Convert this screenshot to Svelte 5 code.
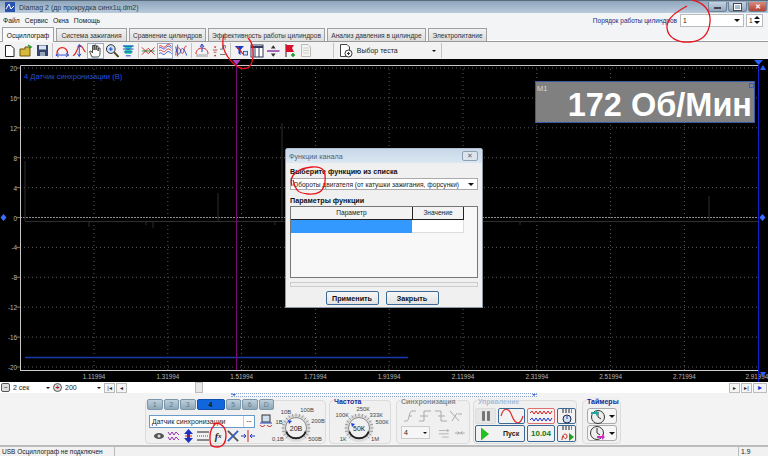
<script>
  const tabs = [
    ['Осциллограф', 52], ['Система зажигания', 71], ['Сравнение цилиндров', 77],
    ['Эффективность работы цилиндров', 117], ['Анализ давления в цилиндре', 99], ['Электропитание', 59]
  ];
  const channels = ['1', '2', '3', '4', '5', '6', 'D'];
  const ys = [20, 16, 12, 8, 4, 0, -4, -8, -12, -16, -20];
  const xs = ['1.11994', '1.31994', '1.51994', '1.71994', '1.91994', '2.11994', '2.31994', '2.51994', '2.71994', '2.91994'];
  const yPos = (i) => 67 + i * 29.9;
  const xPos = (i) => 94 + i * 73.8;
  const grid = [94, 167.8, 241.6, 315.4, 389.2, 463, 536.8, 610.6, 684.4];
  const ticks = (n, a0, a1, r0, r1) =>
    Array.from({ length: n }, (_, i) => {
      const a = ((a0 + ((a1 - a0) * i) / (n - 1)) * Math.PI) / 180;
      return [r0 * Math.cos(a), r0 * Math.sin(a), r1 * Math.cos(a), r1 * Math.sin(a)];
    });
  const knobTicks = ticks(19, 135, 405, 11.5, 14.5);
</script>

<div class="app">
  <header class="titlebar">
    <svg class="appicon" width="10" height="10" viewBox="0 0 10 10"><rect width="10" height="10" fill="#2a52b0"/><path d="M1 7 4 2 6 7 9 4" stroke="#fff" fill="none"/></svg>
    <span class="title">Diamag 2 (др прокрудка синх1ц.dm2)</span>
    <div class="winbtns">
      <span class="wb"><i class="min"></i></span>
      <span class="wb"><i class="rest"></i></span>
      <span class="wb close">✕</span>
    </div>
  </header>

  <div class="menubar">
    <nav class="menu"><span>Файл</span><span>Сервис</span><span>Окна</span><span>Помощь</span></nav>
    <div class="order">
      <span class="orderlabel">Порядок работы цилиндров</span>
      <div class="combo ordercombo"><span>1</span><b class="arrow"></b></div>
      <div class="spin"><span>1</span><span class="spinarrows"><b class="up"></b><b class="arrow"></b></span></div>
    </div>
  </div>

  <div class="tabs">
    {#each tabs as [label, w], i}
      <div class="tab" class:active={i === 0} style="width:{w}px">{label}</div>
    {/each}
  </div>

  <div class="toolbar">
    <button class="tb"><svg width="13" height="14" viewBox="0 0 13 14"><path d="M2.500 1.500H8L11 4.500V12.500H2.500Z" fill="#fff" stroke="#222"/></svg></button>
    <button class="tb"><svg width="14" height="14" viewBox="0 0 14 14"><path d="M1 5H6V3H11V12H1Z" fill="#d8b838" stroke="#6a5510"/><path d="M9 1l3 2-2 1" stroke="#1a9a30" fill="none" stroke-width="1.500"/></svg></button>
    <button class="tb"><svg width="13" height="13" viewBox="0 0 13 13"><rect x="1" y="1" width="11" height="11" fill="#33456e"/><rect x="3" y="1.500" width="7" height="4" fill="#dfe4ee"/><rect x="4" y="8" width="5" height="4" fill="#9aa4b8"/></svg></button>
    <i class="sep"></i>
    <button class="tb"><svg width="16" height="15" viewBox="0 0 16 15"><path d="M2 11C3 2 13 2 14 11" fill="none" stroke="#e02020" stroke-width="1.400"/><path d="M1 12.500H15M1 12.500l3-2M1 12.500l3 2M15 12.500l-3-2M15 12.500l-3 2" stroke="#2040d0" fill="none"/></svg></button>
    <button class="tb"><svg width="16" height="15" viewBox="0 0 16 15"><path d="M1 13C5 13 6 2 9 2S13 9 15 9" fill="none" stroke="#e02020" stroke-width="1.300"/><path d="M8 1V14M8 1 6 4M8 1l2 3M8 14l-2-3M8 14l2-3" stroke="#2040d0" fill="none"/></svg></button>
    <button class="tb on"><svg width="14" height="15" viewBox="0 0 14 15"><path d="M4 14 1.500 8.500 3 8 4.500 10V2.500H6V7L6.500 2H8V7L8.500 3H10V8L10.500 5H12V10C12 12 11 14 10 14Z" fill="#fff" stroke="#222" stroke-width=".8"/></svg></button>
    <button class="tb"><svg width="15" height="15" viewBox="0 0 15 15"><circle cx="6" cy="6" r="4.500" fill="#cfe6f6" stroke="#223"/><path d="M4 6H8M6 4V8" stroke="#1a40c0"/><path d="M9.500 9.500 14 14" stroke="#524020" stroke-width="2"/></svg></button>
    <button class="tb"><svg width="15" height="15" viewBox="0 0 15 15"><path d="M2 2H13L9 7H6Z" fill="#22c8b8"/><path d="M4 7H11V11H4Z" fill="#22d8a0"/><path d="M2 3H13M2 6H13M3 9H12M5 13H10" stroke="#2040c0"/></svg></button>
    <i class="sep"></i>
    <button class="tb"><svg width="16" height="14" viewBox="0 0 16 14"><path d="M1 3 8 10 15 3M1 11 8 4 15 11" fill="none" stroke="#d82020"/><path d="M1 7H15" stroke="#208030"/></svg></button>
    <button class="tb on"><svg width="16" height="15" viewBox="0 0 16 15"><path d="M1 3C4 0 5 6 8 3S12 0 15 3M1 8C4 5 5 11 8 8S12 5 15 8" fill="none" stroke="#d82020"/><path d="M1 5C4 2 5 8 8 5S12 2 15 5M1 11C4 8 5 14 8 11S12 8 15 11" fill="none" stroke="#2040d0"/></svg></button>
    <button class="tb"><svg width="16" height="15" viewBox="0 0 16 15"><path d="M2 13C2 3 6 3 7 7S10 13 11 7 14 3 14 3" fill="none" stroke="#d82020"/><path d="M2 3C3 13 6 13 7 9S10 2 14 13" fill="none" stroke="#2040d0"/><path d="M4 1V14" stroke="#208030"/></svg></button>
    <i class="sep"></i>
    <button class="tb wide"><svg width="16" height="15" viewBox="0 0 16 15"><path d="M2 11C2 3 14 3 14 11" fill="none" stroke="#d82020"/><path d="M8 1V9M6 4 8 1l2 3" stroke="#2040d0" fill="none"/><rect x="2" y="11" width="12" height="3" fill="#c8c8c8"/></svg></button>
    <button class="tb wide"><svg width="18" height="15" viewBox="0 0 18 15"><path d="M1 7H6M2 9.500H5" stroke="#b04040"/><path d="M2 3H5L3.500 5ZM2 14H5L3.500 12Z" fill="#c02020"/><path d="M9 6H12V2H15V5M9 12H15" stroke="#666" fill="none"/></svg></button>
    <i class="sep"></i>
    <button class="tb filter"><svg width="17" height="15" viewBox="0 0 17 15"><path d="M1 2H12L8 7V13L5.500 11V7Z" fill="#1838c8"/><path d="M4 3 11 12" stroke="#d82020" stroke-width="1.500"/><rect x="11.500" y="8.500" width="5" height="4.500" fill="#cfe0f6" stroke="#2050b0"/></svg></button>
    <button class="tb"><svg width="14" height="14" viewBox="0 0 14 14"><rect x="1" y="1" width="12" height="12" fill="#fff" stroke="#323a60"/><path d="M1 3H13" stroke="#323a60" stroke-width="2"/><path d="M5 3V13M9 3V13" stroke="#323a60"/><path d="M2 4h2v9H2Z" fill="#b8c4ee"/></svg></button>
    <button class="tb"><svg width="15" height="14" viewBox="0 0 15 14"><path d="M1 7H14" stroke="#8a30a0" stroke-width="1.500"/><path d="M7.500 1 5 4.500H10ZM7.500 13 5 9.500H10Z" fill="#333"/></svg></button>
    <button class="tb"><svg width="14" height="15" viewBox="0 0 14 15"><path d="M3 1V14" stroke="#222"/><path d="M3 2H11L9 5 11 9H3Z" fill="#d8102a"/><path d="M10 10V14M8 12H12" stroke="#10a020" stroke-width="1.500"/></svg></button>
    <button class="tb"><svg width="12" height="15" viewBox="0 0 12 15"><path d="M1.500 1.500H8L10.500 4V13.500H1.500Z" fill="#f4f4f0" stroke="#bbb"/><path d="M3 5H9M3 7.500H9M3 10H9" stroke="#ccc"/></svg></button>
    <i class="sep big"></i>
    <div class="testsel">
      <svg width="15" height="15" viewBox="0 0 15 15"><path d="M2.500 1.500H9L11.500 4V13.500H2.500Z" fill="#fff" stroke="#444"/><circle cx="10.500" cy="10.500" r="3.500" fill="#fff" stroke="#333"/><path d="M9 10.500H12M10.500 9V12" stroke="#333"/></svg>
      <span>Выбор теста</span>
      <b class="arrow"></b>
    </div>
    <i class="sep"></i>
  </div>

  <svg class="plot" width="768" height="323" viewBox="0 58 768 323">
    <rect x="0" y="58" width="768" height="323" fill="#000"/>
    {#each ys as v, i}
      <line x1="20" x2="757" y1={yPos(i)} y2={yPos(i)} class="dot" class:zero={v === 0}/>
      <text x="17" y={yPos(i) + 3} text-anchor="end" class="axis">{v}</text>
      <line x1="16" x2="20" y1={yPos(i)} y2={yPos(i)} stroke="#777"/>
    {/each}
    {#each grid as x}
      <line x1={x} x2={x} y1="64" y2="369" class="dot"/>
    {/each}
    {#each xs as label, i}
      <text x={Math.min(xPos(i), 757)} y="378" text-anchor="middle" class="axis">{label}</text>
    {/each}
    <path d="M20.500 369V64.500H758" fill="none" stroke="#c8c8c8"/>
    <path d="M20 369.500H758" stroke="#d0d0d0"/>
    <path d="M25 220.500H758M25 220V160M89 220V226M146 220V224M153 220V227M218 220V192M275 220V224M282 220V122M420 220V226M520 220V224M709 220V195" stroke="#2e2e2e"/>
    <path d="M25 356.500H408" stroke="#1a38b0" stroke-width="1.400"/>
    <line x1="236.500" x2="236.500" y1="64" y2="369" stroke="#7a0a7a"/>
    <path d="M232.500 59H240.500L236.500 64Z" fill="#b040c0"/>
    <line x1="758.500" x2="758.500" y1="64" y2="381" stroke="#1420d0"/>
    <path d="M754 59H763L758.500 64Z" fill="#2a60ff"/>
    <path d="M763 64 766 69H760ZM763 376 766 371H760Z" fill="#2a60ff"/>
    <path d="M3.500 213 6.500 216.500 3.500 220 .5 216.500ZM762.500 213 765.500 216.500 762.500 220 759.500 216.500Z" fill="#3a70ff"/>
    <text x="24" y="78" class="chname">4 Датчик синхронизации (В)</text>
    <rect x="535.500" y="80.500" width="219" height="41" fill="#808080" stroke="#3a5aa8"/>
    <rect x="749.500" y="82.500" width="4" height="4" fill="none" stroke="#3a5ad0"/>
    <text x="537" y="90" class="m1">M1</text>
    <text x="752" y="115" text-anchor="end" class="rpm">172 Об/Мин</text>
  </svg>

  <div class="scrollrow">
    <div class="scrollleft">
      <i class="roundbtn">−</i>
      <div class="flatcombo w1"><span>2 сек</span><b class="arrow"></b></div>
      <i class="roundbtn red">+</i>
      <div class="flatcombo w2"><span>200</span><b class="arrow"></b></div>
      <i class="navbtn">|◂</i>
      <i class="navbtn">◂</i>
    </div>
    <i class="thumb"></i>
    <div class="scrollright">
      <i class="navbtn">▸</i>
      <i class="navbtn">▸|</i>
      <i class="navbtn blue">▸</i>
    </div>
  </div>

  <div class="panel">
    <div class="ruler"><b class="rm l"></b><b class="rm r"></b></div>
    <div class="groups">
      <section class="group channel">
        <div class="chbtns">
          {#each channels as c}
            <span class="chbtn" class:sel={c === '4'}>{c}</span>
          {/each}
        </div>
        <div class="chfield">
          <div class="namefield"><span>Датчик синхронизации</span><b>...</b></div>
          <svg width="14" height="14" viewBox="0 0 14 14"><rect x="3" y="1" width="8" height="7" fill="#cde" stroke="#333"/><path d="M1 11C2 13 5 13 6 11M8 11C9 13 12 13 13 11" fill="none" stroke="#c02020"/><path d="M1 9H13" stroke="#2040c0"/></svg>
        </div>
        <div class="chicons">
          <span class="ci"><svg width="12" height="10" viewBox="0 0 12 10"><ellipse cx="6" cy="5" rx="5" ry="3" fill="#555"/><circle cx="6" cy="5" r="1.500" fill="#ddd"/></svg></span>
          <span class="ci"><svg width="13" height="13" viewBox="0 0 13 13"><path d="M1 2 3 5 5 2 7 5 9 2 12 5M1 7 3 10 5 7 7 10 9 7 12 10" fill="none" stroke="#9a30b0"/></svg></span>
          <span class="ci"><svg width="11" height="14" viewBox="0 0 11 14"><path d="M5.500 0 10 5H7V9H10L5.500 14 1 9H4V5H1Z" fill="#1a30c0"/><path d="M2 7H9" stroke="#d02020"/></svg></span>
          <span class="ci"><svg width="14" height="12" viewBox="0 0 14 12"><path d="M1 2H13M1 10H13" stroke="#222"/><path d="M1 6H13" stroke="#555" stroke-dasharray="1 1"/></svg></span>
          <span class="ci fx">f<small>x</small></span>
          <span class="ci"><svg width="12" height="12" viewBox="0 0 13 13"><path d="M1 1 12 12" stroke="#555" stroke-width="2"/><path d="M12 1 1 12" stroke="#3060c0" stroke-width="2"/></svg></span>
          <span class="ci"><svg width="14" height="12" viewBox="0 0 14 12"><path d="M7 0V12" stroke="#d02020"/><path d="M0 6H5M9 6H14M3 4l2 2-2 2M11 4 9 6l2 2" stroke="#2040c0" fill="none"/></svg></span>
        </div>
        <svg class="knob k1" width="64" height="36" viewBox="-32 -22 64 36">
          <circle r="14" class="kback"/>
          {#each knobTicks as t}<line x1={t[0]} y1={t[1]} x2={t[2]} y2={t[3]} stroke="#999"/>{/each}
          <circle r="10.500" class="kface"/>
          <path d="M-9.800 3.500A10.500 10.500 0 0 0 9.800 3.500" class="karc"/>
          <path d="M-8-8-4-7-7-4Z" fill="#1a40e0"/>
          <text y="2.500" text-anchor="middle" class="kval">20В</text>
          <text x="-10" y="-14" text-anchor="middle" class="kl">10В</text>
          <text x="11" y="-16" text-anchor="middle" class="kl">100В</text>
          <text x="-17" y="-4" text-anchor="middle" class="kl">1В</text>
          <text x="22" y="-5" text-anchor="middle" class="kl">200В</text>
          <text x="-18" y="13" text-anchor="middle" class="kl">0,1В</text>
          <text x="19" y="13" text-anchor="middle" class="kl">500В</text>
        </svg>
      </section>

      <section class="group freq">
        <h3 class="navy">Частота</h3>
        <svg class="knob" width="64" height="36" viewBox="-32 -22 64 36">
          <circle r="14" class="kback"/>
          {#each knobTicks as t}<line x1={t[0]} y1={t[1]} x2={t[2]} y2={t[3]} stroke="#999"/>{/each}
          <circle r="10.500" class="kface"/>
          <path d="M-9.800 3.500A10.500 10.500 0 0 0 9.800 3.500" class="karc"/>
          <path d="M-8-5-4-4-7-1Z" fill="#1a40e0"/>
          <text y="2.500" text-anchor="middle" class="kval">50К</text>
          <text x="-17" y="-11" text-anchor="middle" class="kl">100К</text>
          <text x="4" y="-17" text-anchor="middle" class="kl">250К</text>
          <text x="17" y="-11" text-anchor="middle" class="kl">333К</text>
          <text x="23" y="-4" text-anchor="middle" class="kl">500К</text>
          <text x="-16" y="13" text-anchor="middle" class="kl">1К</text>
          <text x="16" y="13" text-anchor="middle" class="kl">1М</text>
        </svg>
      </section>

      <section class="group sync">
        <h3 class="grey">Синхронизация</h3>
        <div class="syncrow">
          <svg width="14" height="12" viewBox="0 0 14 12"><path d="M1 11H4C6 11 6 1 9 1H13M6 6H9" stroke="#aaa" fill="none"/></svg>
          <svg width="14" height="12" viewBox="0 0 14 12"><path d="M1 11H6V1H13M2 6H10" stroke="#aaa" fill="none"/></svg>
          <svg width="14" height="12" viewBox="0 0 14 12"><path d="M1 1H7V11H13M4 6H11" stroke="#aaa" fill="none"/></svg>
          <svg width="14" height="12" viewBox="0 0 14 12"><path d="M1 1 10 11M3 11 8 3M9 4H13" stroke="#aaa" fill="none"/></svg>
        </div>
        <div class="syncrow second">
          <div class="flatcombo sc"><span>4</span><b class="arrow"></b></div>
          <svg width="14" height="12" viewBox="0 0 14 12"><path d="M1 3H13M1 7H13M5 11H13M11 1l2 2-2 2" stroke="#aaa" fill="none"/></svg>
          <svg width="14" height="12" viewBox="0 0 14 12"><path d="M1 6H13M4 4 6 6 4 8M10 4 8 6l2 2" stroke="#999" fill="none"/></svg>
        </div>
      </section>

      <section class="group control">
        <h3 class="pale">Управление</h3>
        <div class="ctrlgrid">
          <span class="cb pausebtn"><svg width="10" height="12" viewBox="0 0 10 12"><rect x="1" y="1" width="3" height="10" rx="1" fill="#777"/><rect x="6" y="1" width="3" height="10" rx="1" fill="#777"/></svg></span>
          <span class="cb"><svg width="24" height="14" viewBox="0 0 24 14"><path d="M1 7C4-3 9-1 12 7S20 17 23 7" fill="none" stroke="#e03030" stroke-width="1.200"/></svg></span>
          <span class="cb redb"><svg width="24" height="14" viewBox="0 0 24 14"><path d="M1 4 3 2 5 5 7 2 9 5 11 2 13 5 15 2 17 5 19 2 21 5 23 2" fill="none" stroke="#d02020"/><path d="M1 11 3 9 5 12 7 9 9 12 11 9 13 12 15 9 17 12 19 9 21 12 23 9" fill="none" stroke="#2030d0"/></svg></span>
          <span class="cb"><svg width="14" height="15" viewBox="0 0 14 15"><circle cx="7" cy="10" r="4" fill="#cfe0f0" stroke="#224"/><path d="M7 7V10" stroke="#2040c0"/><path d="M2 1H12M2 3H12" stroke="#223" stroke-dasharray="2 1"/></svg></span>
          <span class="cb start"><svg width="8" height="14" viewBox="0 0 10 16"><path d="M0 0 10 8 0 16Z" fill="#22c020"/></svg><b>Пуск</b></span>
          <span class="cb time">10.04</span>
          <span class="cb"><svg width="14" height="15" viewBox="0 0 14 15"><path d="M2 14C2 7 7 7 7 10S5 14 3 10" fill="none" stroke="#c02020"/><path d="M9 7 14 11 9 15Z" fill="#20a020"/><path d="M2 1H12M2 3H12" stroke="#223" stroke-dasharray="2 1"/></svg></span>
        </div>
      </section>

      <section class="group timers">
        <h3 class="navy">Таймеры</h3>
        <span class="tmr"><svg width="16" height="15" viewBox="0 0 16 15"><circle cx="8" cy="8" r="6.500" fill="#eee" stroke="#333"/><path d="M8 3V8L11 10" stroke="#333" fill="none"/><path d="M1 3H6V1L9 4 6 7V5H1Z" fill="#20a8a0"/></svg><b class="arrow"></b></span>
        <span class="tmr"><svg width="16" height="15" viewBox="0 0 16 15"><circle cx="7" cy="7" r="6.500" fill="#eee" stroke="#333"/><path d="M7 2V7L10 9" stroke="#333" fill="none"/><path d="M7 10H12V8L15 11 12 14V12H7Z" fill="#d030c0"/></svg><b class="arrow"></b></span>
      </section>
    </div>
  </div>

  <footer class="status">
    <span class="s1">USB Осциллограф не подключен</span>
    <span class="s2"></span>
    <span class="s3">1.9</span>
  </footer>

  <div class="dialog">
    <div class="dlgtitle"><span>Функции канала</span><i class="dlgclose">✕</i></div>
    <div class="dlgbody">
      <label class="dlglabel" for="fn">Выберите функцию из списка</label>
      <div class="combo dlgcombo" id="fn"><span>Обороты двигателя (от катушки зажигания, форсунки)</span><b class="arrow"></b></div>
      <div class="dlglabel second">Параметры функции</div>
      <div class="table">
        <div class="trow head"><span class="c1">Параметр</span><span class="c2">Значение</span></div>
        <div class="trow"><span class="c1 selc"></span><span class="c2 emptyc"></span></div>
      </div>
      <div class="progress"></div>
      <div class="dlgbtns"><button class="dbtn b1">Применить</button><button class="dbtn">Закрыть</button></div>
    </div>
  </div>

  <svg class="ink" width="768" height="456" viewBox="0 0 768 456" fill="none" stroke="#e8141c" stroke-width="1.300">
    <path d="M224 35C221 44 224 54 233 63S250 69 252 62 254 44 248 38"/>
    <path d="M692 0C703 2 711 10 710 22S702 41 690 42 668 38 667 28 678 11 687 6"/>
    <path d="M292 186C288 174 300 168 312 167S326 172 325 182 317 195 308 194 296 192 293 180"/>
    <path d="M213 424C221 421 226 428 226 435S224 447 217 447 210 444 210 437 212 428 216 423"/>
  </svg>
</div>

<style>
  :global(body) { margin: 0; }
  .app {
    position: relative; width: 768px; height: 456px; overflow: hidden;
    display: flex; flex-direction: column;
    background: #f0f0f0; color: #222;
    font-family: "Liberation Sans", Arial, sans-serif; font-size: 6.600px;
  }
  i { font-style: normal; }
  button { font-family: inherit; padding: 0; }
  .titlebar {
    height: 13px; flex: none; display: flex; align-items: center;
    padding-left: 5px; gap: 4px; box-sizing: border-box;
    border-top: 1px solid #5a6b7c;
    background: linear-gradient(#8fa6bd, #b9cadb);
    color: #2a3a48; font-size: 7px;
  }
  .title { flex: 1; }
  .winbtns { display: flex; margin-right: 1px; gap: 1px; }
  .wb {
    width: 19px; height: 10px; border: 1px solid #6f8296; border-top: 0; box-sizing: border-box;
    border-radius: 0 0 3px 3px; background: linear-gradient(#c2d2e2, #94a8bc);
    display: flex; align-items: center; justify-content: center;
  }
  .wb .min { width: 7px; height: 2px; background: #fff; border: 1px solid #445; box-sizing: border-box; margin-top: 3px; }
  .wb .rest { width: 7px; height: 6px; border: 1px solid #fff; outline: 1px solid #445; box-sizing: border-box; }
  .wb.close { background: linear-gradient(#d88a80, #b84030); color: #fff; font-size: 7px; font-weight: bold; }
  .menubar {
    height: 14px; flex: none; display: flex; align-items: center; justify-content: space-between;
    background: #f3f4f5; padding: 0 5px 0 3px;
  }
  .menu { display: flex; gap: 5px; font-size: 6.800px; }
  .order { display: flex; align-items: center; }
  .orderlabel { color: #1a2a80; font-size: 6.500px; margin-right: 3px; }
  .combo {
    display: flex; align-items: center; justify-content: space-between;
    box-sizing: border-box; background: #fff; border: 1px solid #bbb; padding: 0 3px 0 2px;
  }
  .ordercombo { width: 64px; height: 13px; }
  .spin {
    width: 17px; height: 13px; margin-left: 2px; box-sizing: border-box; background: #fff; border: 1px solid #bbb;
    display: flex; align-items: center; justify-content: space-between; padding: 0 2px;
  }
  .spinarrows { display: flex; flex-direction: column; gap: 2px; }
  .arrow { display: block; width: 0; height: 0; border: 3px solid transparent; border-top-color: #111; border-bottom: 0; }
  .up { display: block; width: 0; height: 0; border: 3px solid transparent; border-bottom-color: #111; border-top: 0; }
  .tabs {
    height: 15px; flex: none; display: flex; align-items: flex-end; gap: 2px;
    padding-left: 2px; background: #f3f4f5; border-bottom: 1px solid #999; box-sizing: border-box; box-shadow: inset 0 -1px 0 #fff;
  }
  .tab {
    height: 13px; box-sizing: border-box; display: flex; align-items: center; justify-content: center;
    background: linear-gradient(#f2f2f2, #dcdcdc); border: 1px solid #a0a0a0; border-bottom: 0;
    font-size: 6.600px; white-space: nowrap; color: #333;
  }
  .tab.active { height: 15px; background: #f8f8f8; margin-bottom: -1px; color: #111; }
  .toolbar {
    height: 17px; flex: none; display: flex; align-items: center;
    padding-left: 1px; background: #f2f2f2; box-sizing: border-box;
  }
  .tb {
    width: 16.500px; height: 16px; border: 1px solid transparent; background: none;
    display: flex; align-items: center; justify-content: center; box-sizing: border-box; flex: none;
  }
  .tb.on { background: #fafafa; border-color: #9ab0c8; }
  .tb.wide { width: 18px; }
  .tb.filter { width: 16px; }
  .sep { width: 1px; height: 15px; background: #c4c4c4; margin: 0 1.250px; flex: none; }
  .sep.big { margin-left: 18px; }
  .testsel { display: flex; align-items: center; width: 105px; font-size: 7px; gap: 2px; box-sizing: border-box; padding-left: 3px; }
  .testsel span { flex: 1; padding-left: 2px; }
  .testsel .arrow { border-width: 2.500px; border-bottom: 0; margin-right: 4px; }
  .plot { display: block; flex: none; }
  .dot { stroke: #5a5a5a; stroke-dasharray: 1 3; }
  .zero { stroke: #8e8e8e; stroke-dasharray: 2 1; }
  .axis { fill: #b8b8b8; font-size: 6.300px; }
  .chname { fill: #2050e0; font-size: 7.600px; }
  .m1 { fill: #d8d8d8; font-size: 7.500px; }
  .rpm { fill: #fff; font-size: 32.500px; font-weight: bold; }
  .scrollrow { height: 11px; flex: none; display: flex; align-items: center; background: #fff; position: relative; }
  .scrollleft { display: flex; align-items: center; gap: 1px; width: 195px; flex: none; padding-left: 1px; box-sizing: border-box; }
  .scrollright { display: flex; gap: 1px; margin-left: auto; padding-right: 1px; }
  .thumb { width: 8px; height: 11px; background: #e8e8e8; border: 1px solid #bbb; box-sizing: border-box; flex: none; }
  .roundbtn {
    width: 9px; height: 9px; border: 1px solid #555; box-sizing: border-box; border-radius: 2px; background: #ddd;
    font-size: 7px; line-height: 7px; text-align: center; flex: none;
  }
  .roundbtn.red { color: #c01010; font-weight: bold; border-radius: 50%; }
  .flatcombo { display: flex; align-items: center; justify-content: space-between; box-sizing: border-box; padding: 0 2px; flex: none; font-size: 7px; }
  .flatcombo.w1 { width: 41px; }
  .flatcombo.w2 { width: 40px; }
  .flatcombo .arrow { border-width: 2px; border-bottom: 0; }
  .navbtn {
    min-width: 11px; height: 10px; border: 1px solid #bbb; box-sizing: border-box; background: #f4f4f4;
    font-size: 6px; line-height: 8px; text-align: center; color: #222; padding: 0 1px;
  }
  .navbtn.blue { color: #1030e0; min-width: 14px; font-size: 8px; }
  .panel { height: 54px; flex: none; box-sizing: border-box; background: #f3f3f3; border-bottom: 2px solid #bcbcbc; }
  .ruler {
    height: 4px; margin: 0 231px 0 231px; box-sizing: border-box; background: #f8f8ff;
    border: 1px dotted #8aa4d0; display: flex; justify-content: space-between; align-items: center;
  }
  .rm { width: 0; height: 0; border: 2px solid transparent; border-top-color: #3060e0; border-bottom: 0; }
  .groups { display: flex; gap: 3px; padding: 3px 0 0 145px; align-items: stretch; }
  .group {
    position: relative; box-sizing: border-box; height: 44px;
    border: 1px solid #dcdcdc; border-radius: 4px; background: #f0f0f0; flex: none;
  }
  .group h3 {
    position: absolute; top: -4px; left: 3px; margin: 0; padding: 0 1px; background: #f0f0f0;
    font-size: 7px; line-height: 9px; white-space: nowrap;
  }
  .navy { color: #142a96; }
  .grey { color: #888; }
  .pale { color: #a8bcd8; }
  .channel { width: 181px; padding: 0 0 0 1px; }
  .chbtns { display: flex; gap: 1px; margin-top: -2px; }
  .chbtn {
    width: 15.500px; height: 11px; box-sizing: border-box; background: linear-gradient(#bcd0dc, #8ea8b8); color: #6a7a88;
    border: 1px solid #7c96aa; border-radius: 2px; text-align: center; font-size: 7px; line-height: 9px;
  }
  .chbtn.sel { width: 28px; background: #1166dd; color: #111; font-weight: bold; border-color: #1050b0; }
  .chfield { display: flex; align-items: center; gap: 4px; margin-top: 4px; padding-left: 2px; }
  .namefield {
    width: 106px; height: 13px; box-sizing: border-box; border: 1px solid #6a9ac8; background: #fff;
    display: flex; align-items: center; justify-content: space-between; padding-left: 2px; font-size: 7px;
  }
  .namefield b { width: 10px; border-left: 1px solid #ccc; height: 100%; text-align: center; font-size: 6px; line-height: 9px; }
  .chicons { display: flex; align-items: center; padding-left: 4.500px; margin-top: 1px; }
  .ci { width: 14.800px; height: 14px; display: flex; align-items: center; justify-content: center; flex: none; }
  .fx { font-family: "Liberation Serif", serif; font-style: italic; font-weight: bold; font-size: 10px; }
  .fx small { font-size: 7px; }
  .knob { position: absolute; display: block; }
  .k1 { left: 118px; top: 5px; }
  .kback { fill: #dcdcdc; }
  .kface { fill: #f0f0f0; stroke: #888; }
  .karc { fill: none; stroke: #222; stroke-width: 2; }
  .kval { font-size: 7px; fill: #222; }
  .kl { font-size: 5.800px; fill: #444; }
  .freq { width: 62px; }
  .freq .knob { left: -3px; top: 5px; }
  .sync { width: 74px; margin-left: 2px; padding: 9px 4px 0; }
  .syncrow { display: flex; justify-content: space-between; padding: 0 2px; align-items: center; }
  .syncrow.second { margin-top: 4px; padding: 0; gap: 4px; justify-content: flex-start; }
  .flatcombo.sc { width: 29px; height: 13px; background: #f6f6f6; border: 1px solid #ccc; margin-right: 4px; }
  .control { width: 104px; padding: 7px 0 0 1px; }
  .ctrlgrid { display: grid; grid-template-columns: 21px 27px 28px 19px; grid-template-rows: 16px 17px; gap: 1px 2px; }
  .cb {
    box-sizing: border-box; border: 1px solid #3c6a96; border-radius: 2px; background: #f2f2f2;
    display: flex; align-items: center; justify-content: center;
  }
  .cb.pausebtn { border-color: #ddd; background: #e6e6e6; }
  .cb.redb { border-color: #e07070; }
  .start { grid-column: 1 / span 2; justify-content: flex-start; gap: 14px; padding-left: 5px; font-size: 7px; }
  .time { color: #0a7a10; font-weight: bold; font-size: 8px; }
  .timers { width: 39px; margin-left: 2px; padding: 7px 0 0 4px; display: flex; flex-direction: column; gap: 1px; }
  .tmr {
    width: 30px; height: 16px; box-sizing: border-box; border: 1px solid #aaa; border-radius: 3px; background: #f6f6f6;
    display: flex; align-items: center; justify-content: center; gap: 3px;
  }
  .status { height: 10px; flex: none; display: flex; background: #f1f1f1; box-sizing: border-box; }
  .s1 { width: 115px; box-sizing: border-box; padding-left: 2px; border-right: 1px solid #bbb; font-size: 6.500px; line-height: 10px; white-space: nowrap; }
  .s2 { flex: 1; }
  .s3 { width: 30px; box-sizing: border-box; padding-left: 2px; border-left: 1px solid #bbb; font-size: 6.800px; line-height: 10px; }
  .dialog {
    position: absolute; left: 285px; top: 148px; width: 198px; height: 160px; box-sizing: border-box;
    background: #f0f0f0; border: 1px solid #8a9aa8; border-radius: 3px 3px 0 0;
    border-top-color: #b0c0d0;
  }
  .dlgtitle {
    height: 14px; display: flex; align-items: center; justify-content: space-between; box-sizing: border-box;
    background: linear-gradient(#c8d8e8, #dbe7f2); padding: 0 4px 0 3px; color: #556070; font-size: 7.200px;
  }
  .dlgclose {
    width: 16px; height: 10px; box-sizing: border-box; border: 1px solid #8fa2b4; border-radius: 2px; color: #667;
    text-align: center; font-size: 7px; line-height: 8px; background: #dbe5ee;
  }
  .dlgbody { padding: 4px 4px 0 4px; }
  .dlglabel { display: block; font-weight: bold; font-size: 7.200px; line-height: 10px; color: #111; }
  .dlglabel.second { margin-top: 6px; }
  .dlgcombo { width: 188px; height: 12px; margin-top: 1px; font-size: 6.600px; white-space: nowrap; padding-right: 3px; border-color: #aaa; }
  .table { width: 188px; height: 72px; box-sizing: border-box; border: 1px solid #777; background: #f8f8f8; }
  .trow { display: flex; }
  .trow.head { height: 13px; font-size: 6.600px; line-height: 12px; text-align: center; }
  .head span { background: #f3f3f3; border-bottom: 1px solid #222; box-sizing: border-box; }
  .c1 { width: 121px; }
  .c2 { width: 52px; border-left: 1px solid #222; border-right: 1px solid #222; box-sizing: border-box; }
  .selc { height: 13px; background: #3399ff; }
  .emptyc { height: 13px; background: #fff; border: 0; border-bottom: 1px solid #ddd; border-right: 1px solid #ddd; }
  .progress { width: 188px; height: 5px; margin-top: 4px; box-sizing: border-box; border: 1px solid #ccc; background: #eee; }
  .dlgbtns { display: flex; justify-content: center; gap: 7px; margin-top: 4px; padding-right: 4px; }
  .dbtn {
    width: 53px; height: 14px; box-sizing: border-box; border: 1px solid #3c6a96; border-radius: 2px;
    background: linear-gradient(#f6f6f6, #e2e2e2); font-size: 7.200px; font-weight: bold; color: #111;
  }
  .ink { position: absolute; left: 0; top: 0; pointer-events: none; }
</style>
